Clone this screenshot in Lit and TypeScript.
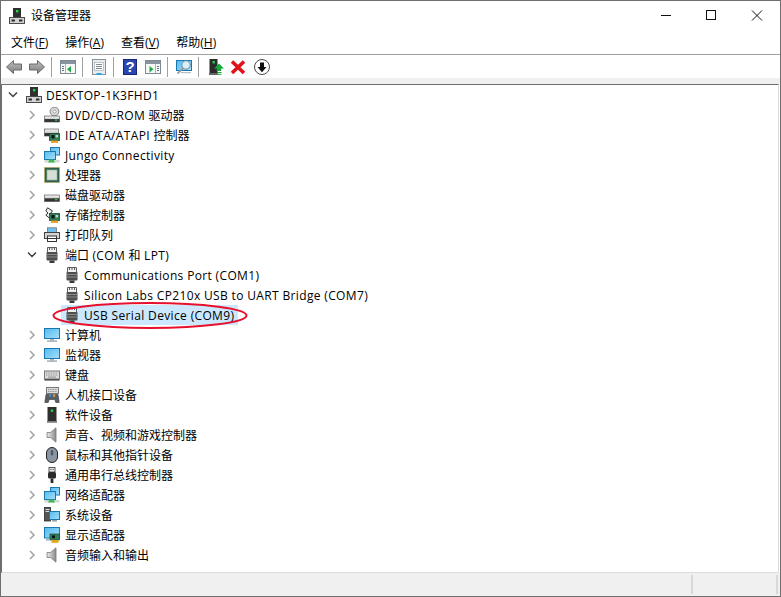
import { LitElement, html, css, svg } from "lit";
import { customElement } from "lit/decorators.js";

const base = (y: number, h: number) => svg`<rect x=".5" y="${y}" width="15" height="${h}" fill="url(#drive)" stroke="#4a4a4a" stroke-width=".6"/><rect x="11" y="${y + h - 2.6}" width="2.4" height="1.4" fill="#2fc24a"/>`;
const board = svg`<rect x="5.5" y="6.5" width="10" height="7" fill="#2f7d5a" stroke="#174a34" stroke-width=".8"/><rect x="7.5" y="8" width="3" height="3.4" fill="#111"/><rect x="11.6" y="8" width="2.4" height="2.4" fill="#b7d8c6"/><rect x="7" y="13.5" width="7" height="2.4" fill="#e8a21c"/>`;
const screen = (x: number, y: number, w: number, h: number) => svg`<rect x="${x}" y="${y}" width="${w}" height="${h}" fill="url(#sky)" stroke="#1b78ae" stroke-width="1"/>`;
const monitor = svg`${screen(.5, 1.5, 15, 10)}<rect x="6" y="12" width="4" height="1.5" fill="#a9b4bb"/><rect x="3" y="13.5" width="10" height="1.2" fill="#8f9aa1"/>`;
const speaker = svg`<path d="M3 5.5h3.5L12 .8v14.4L6.5 10.5H3z" fill="url(#grey)" stroke="#777" stroke-width=".8"/>`;
const port = svg`<path d="M3.5 .5h9v5h-9z" fill="#f0f0f0" stroke="#5e5e5e"/><path d="M5.5 .5v2.5M8 .5v2.5M10.5 .5v2.5" stroke="#5e5e5e"/><rect x="2.5" y="5" width="11" height="8.5" rx="1" fill="#4f4f4f"/><path d="M3 7.5h10M3 10h10" stroke="#8c8c8c"/><rect x="5.5" y="13.5" width="5" height="2.5" fill="#3a3a3a"/>`;
const tower = svg`<rect x="4" y="0" width="8" height="9" fill="#2f2f2f"/><rect x="7" y="2" width="2.4" height="2.4" fill="#22d34a"/><rect x=".5" y="9.5" width="15" height="6" fill="#d2d2d2" stroke="#4a4a4a"/><rect x="2.5" y="11.5" width="3.4" height="2" fill="#2b2b2b"/><rect x="10" y="11.5" width="3.4" height="2" fill="#2b2b2b"/>`;

const ICONS: Record<string, unknown> = {
  computer: tower,
  dvd: svg`<circle cx="10.5" cy="4.5" r="4.4" fill="#d8d8d8" stroke="#858585"/><circle cx="10.5" cy="4.5" r="1.5" fill="#fff" stroke="#858585" stroke-width=".7"/>${base(9, 6)}`,
  ide: svg`<rect x=".5" y="2" width="14" height="7" fill="url(#drive)" stroke="#4a4a4a" stroke-width=".6"/>${board}`,
  net: svg`${screen(6.5, .5, 9, 7.5)}${screen(.5, 4.5, 11, 8)}<rect x=".5" y="13" width="15" height="2.4" fill="#d3d8d3"/><path d="M4 15.4l1.5-3h4l1.5 3z" fill="#3fb851"/>`,
  cpu: svg`<rect x=".5" y=".5" width="15" height="15" fill="#2b6249" stroke="#c8a24a" stroke-dasharray="1 1"/><rect x="3" y="3" width="10" height="10" fill="#d5dfd8" stroke="#9db3a6" stroke-width=".7"/>`,
  disk: base(8, 6.5),
  storage: svg`<path d="M3.5 .8l5 3-2.2 3 2 2-3 2.2-3.5-3 2.2-2-2.2-2z" fill="#eee" stroke="#333" stroke-width="1"/>${board}`,
  printer: svg`<rect x="3.5" y=".8" width="9" height="5" fill="#6fc0ee" stroke="#666" stroke-width=".7"/><rect x=".5" y="5.5" width="15" height="6" fill="#d4d4d4" stroke="#444"/><rect x="3.5" y="9" width="9" height="5.5" fill="#fff" stroke="#333"/><rect x="4" y="11" width="8" height="1" fill="#333"/>`,
  port,
  pc: monitor,
  monitor,
  keyboard: svg`<rect x=".5" y="4" width="15" height="8" fill="#dcdcdc" stroke="#777"/><path d="M2 6h12M2 8h12" stroke="#8f8f8f" stroke-dasharray="1 .7"/><rect x="4" y="9.6" width="8" height="1" fill="#8f8f8f"/><rect x=".5" y="12" width="15" height="1.6" fill="#4f4f4f"/>`,
  hid: svg`<rect x="2.5" y=".5" width="12" height="6" fill="#dcdcdc" stroke="#777"/><path d="M4 2.5h9M4 4.5h9" stroke="#8f8f8f" stroke-dasharray="1 .7"/><path d="M.8 15.5l1.2-8h12l1.2 8h-3.4l-1-3H5.2l-1 3z" fill="#565d65" stroke="#33383d" stroke-width=".6"/><rect x="5" y="7.5" width="2.2" height="2.2" fill="#3d8fd6"/><rect x="9" y="7.5" width="2.2" height="2.2" fill="#e0a13a"/>`,
  soft: svg`<rect x="3.5" y="0" width="9" height="14" fill="#2f2f2f"/><rect x="6.8" y="2.5" width="2.4" height="2.4" fill="#22d34a"/><rect x="3" y="14" width="10" height="1.8" fill="#808080"/>`,
  sound: speaker,
  mouse: svg`<rect x="2.5" y=".5" width="11" height="15" rx="5.5" fill="#8a96a4" stroke="#222"/><rect x="6.8" y="3" width="2.4" height="5.5" rx="1.2" fill="#4f5965"/>`,
  usb: svg`<rect x="5" y=".5" width="6" height="4.5" fill="#f0f0f0" stroke="#555"/><rect x="6.4" y="1.8" width="1.2" height="1.2" fill="#555"/><rect x="8.6" y="1.8" width="1.2" height="1.2" fill="#555"/><rect x="4" y="5" width="8" height="6.5" rx="1.5" fill="#2b2b2b"/><rect x="6.6" y="11.5" width="2.8" height="4.5" fill="#2b2b2b"/>`,
  sys: svg`<rect x=".5" y=".5" width="6" height="13.5" fill="#555" stroke="#2b2b2b" stroke-width=".8"/><rect x="1.5" y="2" width="4" height="1" fill="#ddd"/><rect x="1.5" y="4" width="4" height="1" fill="#ddd"/>${screen(5.5, 4.5, 10, 8)}<rect x="8" y="13" width="5" height="1.6" fill="#9aa5ab"/>`,
  display: svg`${screen(.5, .5, 15, 10.5)}<rect x="6" y="7" width="9.5" height="6" fill="#2f7d5a" stroke="#174a34" stroke-width=".7"/><rect x="8" y="8.5" width="3" height="2.6" fill="#111"/><rect x="7.5" y="13" width="7" height="2.8" fill="#e8a21c"/><rect x="2" y="12" width="3.4" height="1.6" fill="#a9b4bb"/>`,
  tbBack: svg`<path d="M.5 8L7.5 1.5v3.5h8v6h-8v3.500z" fill="url(#grey2)" stroke="#6a6a6a"/>`,
  tbFwd: svg`<path d="M15.5 8L8.5 1.5v3.5h-8v6h8v3.500z" fill="url(#grey2)" stroke="#6a6a6a"/>`,
  tbTreeL: svg`<rect x=".5" y="1.500" width="15" height="13" fill="#f6f8f8" stroke="#7d8a94"/><rect x="1" y="2" width="14" height="3" fill="#87939e"/><path d="M5.500 5v9" stroke="#a8b3bb"/><path d="M2 7.500h2M2 9.500h2M2 11.500h2" stroke="#5f7282"/><path d="M11 7v6.500L7 10.200z" fill="#1fa646"/>`,
  tbProps: svg`<rect x="1.500" y=".5" width="13" height="15" fill="#e8ecef" stroke="#86919a"/><rect x="3.500" y="3.500" width="9" height="8" fill="#fff" stroke="#a5b0b7" stroke-width=".7"/><path d="M5 5.500h6M5 7.500h6M5 9.500h6" stroke="#6f7d88" stroke-width=".9"/><rect x="5.500" y="14" width="5" height="2" fill="#27a4dd"/>`,
  tbHelp: svg`<rect x="1.500" y=".5" width="13" height="15" fill="#2c46b0" stroke="#16277a"/><text x="8" y="13.200" text-anchor="middle" font-family="Liberation Sans" font-size="15" font-weight="700" fill="#fff">?</text>`,
  tbTreeR: svg`<rect x=".5" y="1.500" width="15" height="13" fill="#f6f8f8" stroke="#7d8a94"/><rect x="1" y="2" width="14" height="3" fill="#87939e"/><path d="M10.500 5v9" stroke="#a8b3bb"/><path d="M12 7.500h2M12 9.500h2M12 11.500h2" stroke="#5f7282"/><path d="M4.500 7v6.500L8.500 10.200z" fill="#1fa646"/>`,
  tbScan: svg`<rect x=".5" y="1.500" width="15" height="10" fill="url(#sky)" stroke="#1b78ae"/><circle cx="10" cy="6" r="4.200" fill="#d8eefa" stroke="#6f8898"/><path d="M7 9.200l-5.500 5.500" stroke="#8f9aa1" stroke-width="1.800"/><rect x="5" y="13" width="10" height="1.200" fill="#b5bfc5"/>`,
  tbUpd: svg`<rect x="1.500" y="0" width="8" height="14" fill="#2b2b2b"/><rect x="4.500" y="2" width="2.400" height="2.400" fill="#22d34a"/><rect x="1" y="14" width="9" height="2" fill="#666"/><path d="M11 4.500l5 5h-2.800V12h-4.400V9.500H6z" fill="#17a83b"/><path d="M9 13.500h4.500M9 15.300h4.500" stroke="#17a83b"/>`,
  tbDel: svg`<path d="M1 2.500L13 14M13 2.500L1 14" stroke="#e0131a" stroke-width="3.600"/>`,
  tbDown: svg`<circle cx="8" cy="8" r="7.500" fill="#fff" stroke="#4a4a4a"/><path d="M8 13.200L3.500 8H6V3.500h4V8h2.500z" fill="#0c0c0c"/>`,
};

const icon = (n: string) => html`<svg class="ico" viewBox="0 0 16 16" width="16" height="16">${ICONS[n]}</svg>`;

const chev = (open: boolean) => html`<svg class="chev" viewBox="0 0 16 16" width="16" height="16">${open
  ? svg`<path d="M4 5.500l4 4 4-4" fill="none" stroke="#404040" stroke-width="1.500"/>`
  : svg`<path d="M6 4l4 4-4 4" fill="none" stroke="#a6a6a6" stroke-width="1.600"/>`}</svg>`;

/* Latin runs are set slightly wider than the CJK runs, which keep a 12px advance. */
const label = (t: string) => t.split(/([\x00-\x7f]+)/).filter(Boolean).map(p =>
  /^[\x00-\x7f]/.test(p) ? html`<span class="lat">${p}</span>` : p);

type Row = { l: number; i: string; t: string; open?: boolean; sel?: boolean };
const ROWS: Row[] = [
  { l: 0, i: "computer", t: "DESKTOP-1K3FHD1", open: true },
  { l: 1, i: "dvd", t: "DVD/CD-ROM 驱动器" },
  { l: 1, i: "ide", t: "IDE ATA/ATAPI 控制器" },
  { l: 1, i: "net", t: "Jungo Connectivity" },
  { l: 1, i: "cpu", t: "处理器" },
  { l: 1, i: "disk", t: "磁盘驱动器" },
  { l: 1, i: "storage", t: "存储控制器" },
  { l: 1, i: "printer", t: "打印队列" },
  { l: 1, i: "port", t: "端口 (COM 和 LPT)", open: true },
  { l: 2, i: "port", t: "Communications Port (COM1)" },
  { l: 2, i: "port", t: "Silicon Labs CP210x USB to UART Bridge (COM7)" },
  { l: 2, i: "port", t: "USB Serial Device (COM9)", sel: true },
  { l: 1, i: "pc", t: "计算机" },
  { l: 1, i: "monitor", t: "监视器" },
  { l: 1, i: "keyboard", t: "键盘" },
  { l: 1, i: "hid", t: "人机接口设备" },
  { l: 1, i: "soft", t: "软件设备" },
  { l: 1, i: "sound", t: "声音、视频和游戏控制器" },
  { l: 1, i: "mouse", t: "鼠标和其他指针设备" },
  { l: 1, i: "usb", t: "通用串行总线控制器" },
  { l: 1, i: "net", t: "网络适配器" },
  { l: 1, i: "sys", t: "系统设备" },
  { l: 1, i: "display", t: "显示适配器" },
  { l: 1, i: "sound", t: "音频输入和输出" },
];

const MENUS = [["文件(", "F", ")"], ["操作(", "A", ")"], ["查看(", "V", ")"], ["帮助(", "H", ")"]];
const TOOLS = ["tbBack", "tbFwd", "|", "tbTreeL", "|", "tbProps", "|", "tbHelp", "tbTreeR", "|", "tbScan", "|", "tbUpd", "tbDel", "tbDown"];

@customElement("app-root")
export class AppRoot extends LitElement {
  static styles = css`
    :host {
      display: flex; flex-direction: column; box-sizing: border-box;
      width: 781px; height: 597px; background: #fff;
      border: 1px solid #6f6f6f;
      font: 12px/20px "Open Sans", "Noto Sans CJK SC", sans-serif; color: #000;
    }
    .defs { position: absolute; width: 0; height: 0; }
    svg { display: block; flex: none; }
    .title { display: flex; align-items: center; height: 30px; padding-left: 8px; flex: none; }
    .title .name { margin-left: 6px; }
    .winctl { margin-left: auto; display: flex; }
    .winctl svg { width: 46px; height: 30px; }
    .menu { display: flex; gap: 17px; height: 23px; padding-left: 10px; align-items: center; flex: none; border-bottom: 1px solid #a0a0a0; }
    .menu u { text-underline-offset: 1px; }
    .tools { display: flex; align-items: center; height: 23px; padding-left: 5px; flex: none; }
    .tools .ico { margin-right: 7px; }
    .sep { width: 1px; height: 20px; margin: 0 8px 0 -1px; background: #a0a0a0; }
    .sep:nth-last-child(4) { margin-right: 9px; }
    .strip { height: 6px; background: #f0f0f0; flex: none; }
    .tree { position: relative; flex: 1; min-height: 0; margin-right: 1px; border-top: 1px solid #6d6d6d; border-right: 1px solid #dcdcdc; border-bottom: 1px solid #dcdcdc; border-left: 1px solid #6d6d6d; overflow: hidden; }
    .row { display: flex; align-items: center; height: 20px; white-space: nowrap; }
    .row .txt { padding-top: 2px; }
    .lat { letter-spacing: .35px; }
    .row.l0 { padding-left: 3px; }
    .row.l1 { padding-left: 22px; }
    .row.l2 { padding-left: 59px; }
    .item { display: flex; align-items: center; height: 20px; margin-left: 4px; gap: 4px; }
    .l0 .item { margin-left: 5px; }
    .l1 .item { gap: 5px; }
    .l2 .item { margin-left: 0; padding: 0 4px 0 3px; }
    .item.sel { background: #cce8ff; }
    .ring { position: absolute; left: 49px; top: 215px; }
    .status { display: flex; height: 23px; flex: none; background: #f0f0f0; padding: 2px 0; box-sizing: border-box; }
    .status i { display: block; width: 2px; background: #d8d8d8; }
    .status .a { margin-left: 690px; }
    .status .b { margin-left: 83px; }
  `;

  render() {
    return html`
      <svg class="defs"><defs>
        <linearGradient id="drive" x1="0" y1="0" x2="0" y2="1"><stop offset="0" stop-color="#f4f4f4"/><stop offset=".5" stop-color="#cfcfcf"/><stop offset=".55" stop-color="#3c3c3c"/><stop offset="1" stop-color="#2c2c2c"/></linearGradient>
        <linearGradient id="sky" x1="0" y1="0" x2="1" y2="1"><stop offset="0" stop-color="#4fbcf2"/><stop offset="1" stop-color="#a9def8"/></linearGradient>
        <linearGradient id="grey" x1="0" y1="0" x2="1" y2="0"><stop offset="0" stop-color="#ececec"/><stop offset="1" stop-color="#8a8a8a"/></linearGradient>
        <linearGradient id="grey2" x1="0" y1="0" x2="0" y2="1"><stop offset="0" stop-color="#bdbdbd"/><stop offset="1" stop-color="#7f7f7f"/></linearGradient>
      </defs></svg>
      <div class="title">
        ${icon("computer")}
        <span class="name">设备管理器</span>
        <div class="winctl">
          <svg viewBox="0 0 46 30"><path d="M19 14.500h10" stroke="#111"/></svg>
          <svg viewBox="0 0 46 30"><rect x="18.500" y="9.500" width="9" height="9" fill="none" stroke="#111"/></svg>
          <svg viewBox="0 0 46 30"><path d="M18 9.500l10 10M28 9.500l-10 10" stroke="#111" fill="none"/></svg>
        </div>
      </div>
      <div class="menu">${MENUS.map(m => html`<span>${m[0]}<u>${m[1]}</u>${m[2]}</span>`)}</div>
      <div class="tools">${TOOLS.map(t => t === "|" ? html`<div class="sep"></div>` : icon(t))}</div>
      <div class="strip"></div>
      <div class="tree">
        ${ROWS.map(r => html`<div class="row l${r.l}">
          ${r.l < 2 ? chev(!!r.open) : ""}
          <div class="item ${r.sel ? "sel" : ""}">${icon(r.i)}<span class="txt">${label(r.t)}</span></div>
        </div>`)}
        <svg class="ring" width="199" height="31" viewBox="0 0 199 31"><ellipse cx="99" cy="15.500" rx="96.500" ry="12.500" fill="none" stroke="#e8112d" stroke-width="2"/></svg>
      </div>
      <div class="status"><i class="a"></i><i class="b"></i></div>
    `;
  }
}
